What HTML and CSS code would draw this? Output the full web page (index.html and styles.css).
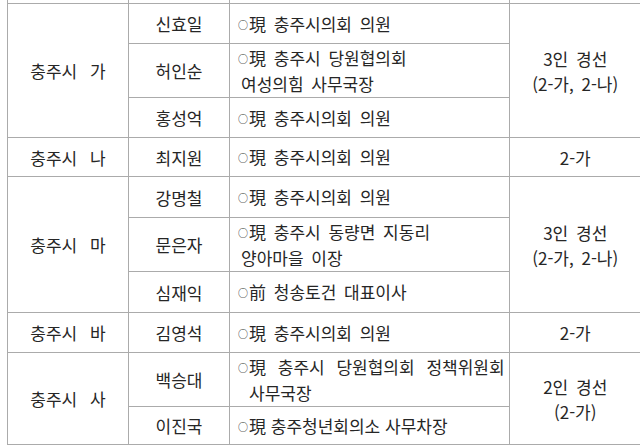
FILE: index.html
```html
<!DOCTYPE html>
<html lang="ko">
<head>
<meta charset="utf-8">
<link rel="stylesheet" href="styles.css">
</head>
<body>
<table class="tbl">
  <colgroup>
    <col class="c-region">
    <col class="c-name">
    <col class="c-career">
    <col class="c-result">
  </colgroup>
  <tr class="r-prev"><td></td><td></td><td></td><td></td></tr>
  <tr class="r40">
    <td class="region" rowspan="3">충주시 가</td>
    <td class="name">신효일</td>
    <td class="career"><span class="mark">○</span>現 충주시의회 의원</td>
    <td class="result" rowspan="3">3인 경선<br>(2-가, 2-나)</td>
  </tr>
  <tr class="r54">
    <td class="name">허인순</td>
    <td class="career hang"><span class="mark">○</span>現 충주시 당원협의회<br>여성의힘 사무국장</td>
  </tr>
  <tr class="r40">
    <td class="name">홍성억</td>
    <td class="career"><span class="mark">○</span>現 충주시의회 의원</td>
  </tr>
  <tr class="r39">
    <td class="region">충주시 나</td>
    <td class="name">최지원</td>
    <td class="career"><span class="mark">○</span>現 충주시의회 의원</td>
    <td class="result">2-가</td>
  </tr>
  <tr class="r41">
    <td class="region" rowspan="3">충주시 마</td>
    <td class="name">강명철</td>
    <td class="career"><span class="mark">○</span>現 충주시의회 의원</td>
    <td class="result" rowspan="3">3인 경선<br>(2-가, 2-나)</td>
  </tr>
  <tr class="r54">
    <td class="name">문은자</td>
    <td class="career hang"><span class="mark">○</span>現 충주시 동량면 지동리<br>양아마을 이장</td>
  </tr>
  <tr class="r41">
    <td class="name">심재익</td>
    <td class="career"><span class="mark">○</span>前 청송토건 대표이사</td>
  </tr>
  <tr class="r40">
    <td class="region">충주시 바</td>
    <td class="name">김영석</td>
    <td class="career"><span class="mark">○</span>現 충주시의회 의원</td>
    <td class="result">2-가</td>
  </tr>
  <tr class="r54">
    <td class="region" rowspan="2">충주시 사</td>
    <td class="name">백승대</td>
    <td class="career hang wide"><span class="spread"><span class="mark">○</span>現 충주시 당원협의회 정책위원회</span><br>사무국장</td>
    <td class="result" rowspan="2">2인 경선<br>(2-가)</td>
  </tr>
  <tr class="r38">
    <td class="name">이진국</td>
    <td class="career tight"><span class="mark">○</span>現 충주청년회의소 사무차장</td>
  </tr>
</table>
</body>
</html>
```

FILE: styles.css
```css
html, body {
  margin: 0;
  padding: 0;
  background: #ffffff;
  overflow: hidden;
}

body {
  width: 640px;
  height: 447px;
  font-family: "Noto Sans CJK KR", "Noto Sans", sans-serif;
  color: #262626;
  font-size: 17px;
}

.tbl {
  border-collapse: collapse;
  margin-top: -17px;
  margin-left: 7px;
  table-layout: fixed;
  width: 633px;
}

.c-region { width: 121px; }
.c-name { width: 101px; }
.c-career { width: 280px; }
.c-result { width: 131px; }

.tbl td {
  border: 1px solid #ababab;
  padding: 0;
  vertical-align: middle;
  line-height: 25px;
  font-weight: 400;
}

.tbl td.result {
  border-right: none;
}

.r-prev { height: 20px; }
.r38 { height: 38px; }
.r39 { height: 39px; }
.r40 { height: 40px; }
.r41 { height: 41px; }
.r54 { height: 54px; }

.region {
  text-align: center;
  word-spacing: 8px;
}

.name {
  text-align: center;
}

.mark {
  font-size: 10px;
  vertical-align: 2px;
  margin-right: 1px;
  word-spacing: 0;
}

.career {
  padding-left: 8px !important;
  word-spacing: 3px;
  white-space: nowrap;
}

.hang {
  padding-left: 11px !important;
  text-indent: -3px;
}

.wide {
  padding-left: 19px !important;
  text-indent: -11px;
}

.spread {
  word-spacing: 7px;
}

.tight {
  word-spacing: 0;
}

.result {
  text-align: center;
  word-spacing: 3px;
}
```
